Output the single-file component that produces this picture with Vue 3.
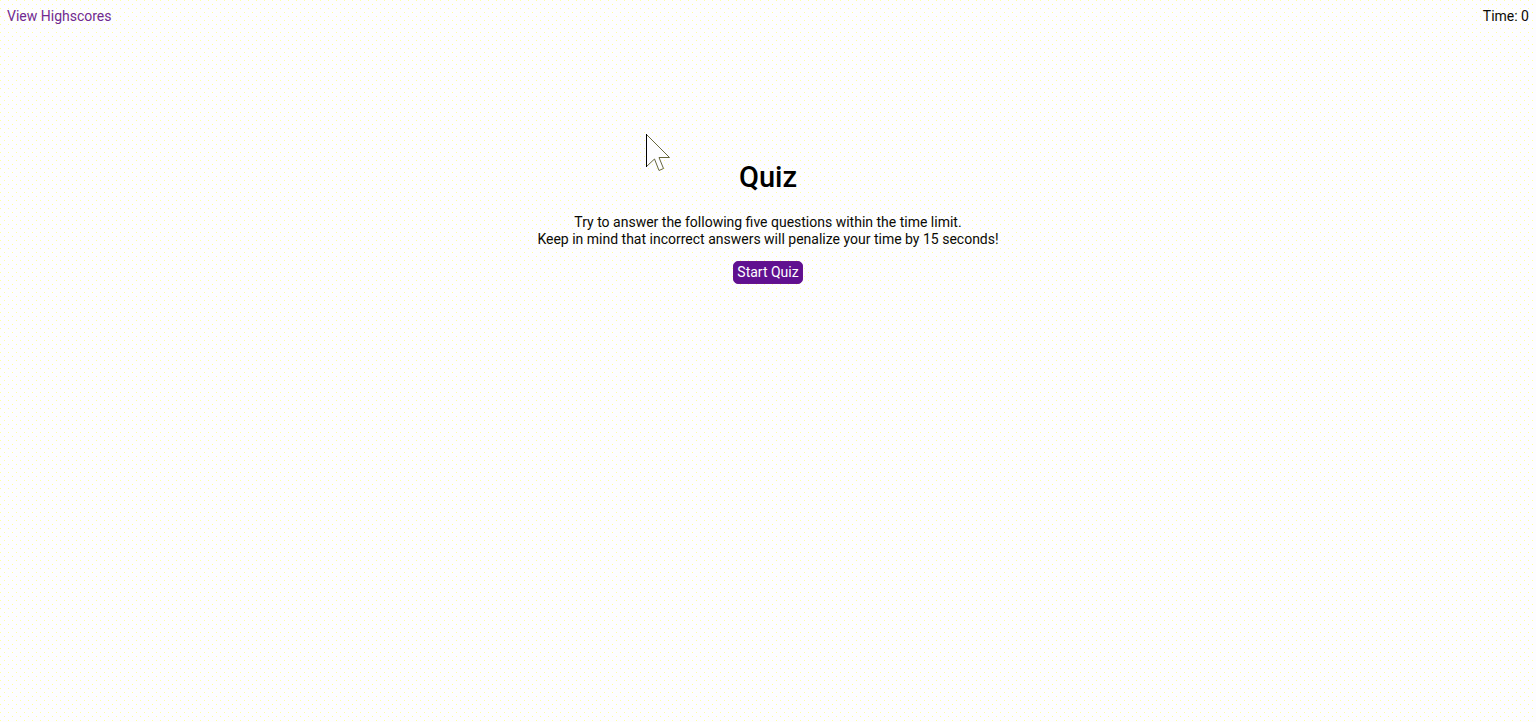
<script setup>
import { ref } from 'vue'
const time = ref(0)
</script>

<template>
  <div class="page">
    <header class="bar">
      <a href="#highscores">View Highscores</a>
      <span>Time: {{ time }}</span>
    </header>
    <main class="intro">
      <h1>Quiz</h1>
      <p>Try to answer the following five questions within the time limit.<br />Keep in mind that incorrect answers will penalize your time by 15 seconds!</p>
      <button type="button">Start Quiz</button>
    </main>
    <svg class="cursor" width="26" height="40" viewBox="0 0 26 40" aria-hidden="true">
      <path d="M1.5 1.5L24.5 24.5H14L18.5 35.5L14 37.5L9.5 26L1.5 33.5" />
      <path class="edge" d="M1.5 1V34" />
    </svg>
  </div>
</template>

<style>
body { margin: 0; }
</style>

<style scoped>
.page {
  min-height: 100vh;
  box-sizing: border-box;
  padding: 8px 7px;
  font: 14px/17px Roboto, sans-serif;
  color: #0a0a05;
  background-color: #fdfdff;
  background-image:
    conic-gradient(from 270deg at 1px 1px, #ffff9c 90deg, transparent 0),
    conic-gradient(from 270deg at 1px 1px, #ffff9c 90deg, transparent 0);
  background-size: 8px 8px;
  background-position: 0 0, 4px 4px;
}
.bar { display: flex; justify-content: space-between; }
a { color: #702a90; text-decoration: none; }
.intro { padding-top: 135px; text-align: center; }
h1 { margin: 0; font-size: 29px; line-height: 35px; font-weight: 500; color: #000; }
p { margin: 19px 0 13px; }
button {
  padding: 2px 3px;
  border: 1px solid #66148e;
  border-radius: 5px;
  background: #601090;
  color: #fff;
  font: inherit;
}
.cursor { position: absolute; left: 645px; top: 133px; }
.cursor path { fill: #fdfdff; stroke: #66663c; stroke-width: 1; }
.cursor .edge { stroke: #000; }
</style>
